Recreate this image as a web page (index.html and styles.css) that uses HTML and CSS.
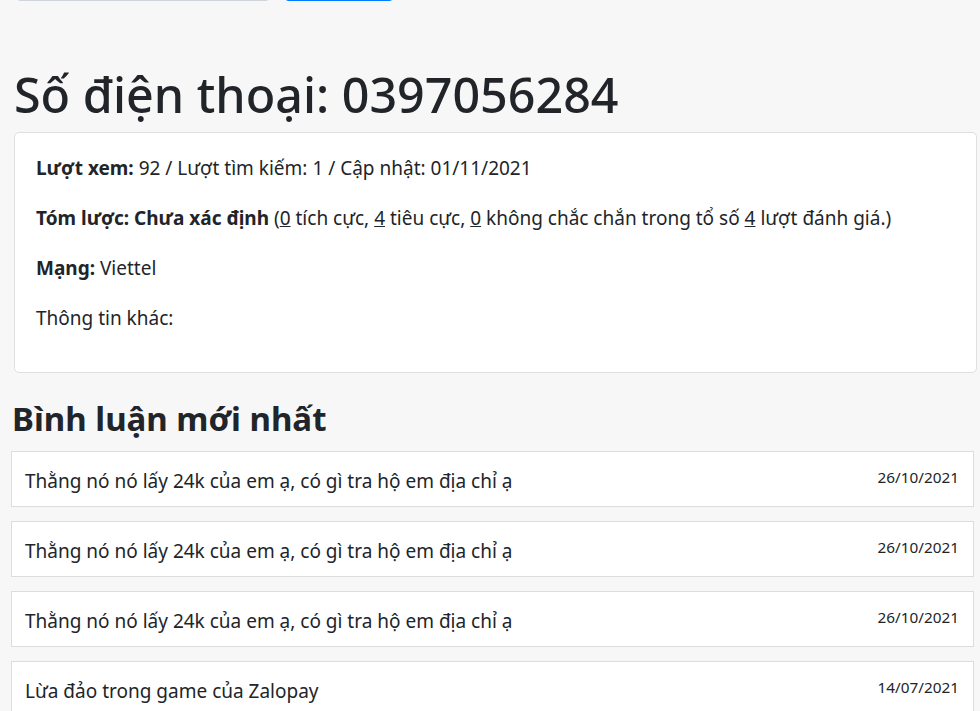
FILE: index.html
```html
<!DOCTYPE html>
<html lang="vi">
<head>
<meta charset="utf-8">
<title>Số điện thoại: 0397056284</title>
<link rel="stylesheet" href="styles.css">
</head>
<body>
<div class="page">
  <form class="search">
    <div class="search-input"></div>
    <div class="search-btn"></div>
  </form>
  <h1 class="title">Số điện thoại: 0397056284</h1>
  <div class="card">
    <p><b>Lượt xem:</b> 92 / Lượt tìm kiếm: 1 / Cập nhật: 01/11/2021</p>
    <p><b>Tóm lược: Chưa xác định</b> (<u>0</u> tích cực, <u>4</u> tiêu cực, <u>0</u> không chắc chắn trong tổ số <u>4</u> lượt đánh giá.)</p>
    <p><b>Mạng:</b> Viettel</p>
    <p>Thông tin khác:</p>
  </div>
  <h2 class="section">Bình luận mới nhất</h2>
  <ul class="comments">
    <li class="comment"><span class="comment-text">Thằng nó nó lấy 24k của em ạ, có gì tra hộ em địa chỉ ạ</span><span class="comment-date">26/10/2021</span></li>
    <li class="comment"><span class="comment-text">Thằng nó nó lấy 24k của em ạ, có gì tra hộ em địa chỉ ạ</span><span class="comment-date">26/10/2021</span></li>
    <li class="comment"><span class="comment-text">Thằng nó nó lấy 24k của em ạ, có gì tra hộ em địa chỉ ạ</span><span class="comment-date">26/10/2021</span></li>
    <li class="comment"><span class="comment-text">Lừa đảo trong game của Zalopay</span><span class="comment-date">14/07/2021</span></li>
  </ul>
</div>
</body>
</html>
```

FILE: styles.css
```css
html, body {
  margin: 0;
  padding: 0;
}
body {
  background: #f7f7f7;
  color: #212529;
  font-family: "Noto Sans", "Open Sans", sans-serif;
  font-size: 19px;
  line-height: 1.5;
  overflow: hidden;
}
.page {
  width: 980px;
}
.search {
  display: flex;
  gap: 15px;
  margin: -37px 0 0 16px;
  height: 38px;
}
.search-input {
  width: 252px;
  height: 36px;
  background: #fff;
  border: 1px solid #ced4da;
  border-radius: 4px;
}
.search-btn {
  width: 108px;
  height: 38px;
  background: #007bff;
  border-radius: 4px;
}
.title {
  margin: 63.5px 0 9.4px 14px;
  font-size: 48.4px;
  font-weight: 500;
  line-height: 1.2;
}
.card {
  margin-left: 14px;
  width: 920px;
  background: #fff;
  border: 1px solid #dfdfdf;
  border-radius: 5px;
  padding: 21px 20px 18px 21px;
}
.card p {
  margin: 0 0 21.5px;
}
.section {
  margin: 26px 0 12px 12px;
  font-size: 33px;
  font-weight: 700;
  line-height: 1.2;
}
.comments {
  list-style: none;
  margin: 0 0 0 11px;
  padding: 0;
  width: 963px;
  display: flex;
  flex-direction: column;
  gap: 14px;
}
.comment {
  display: flex;
  justify-content: space-between;
  align-items: flex-start;
  background: #fff;
  border: 1px solid #dddddd;
  padding: 14px 14px 10px 13px;
}
.comment-text {
  line-height: 30px;
}
.comment-date {
  font-size: 15.3px;
  line-height: 22.7px;
}
```
